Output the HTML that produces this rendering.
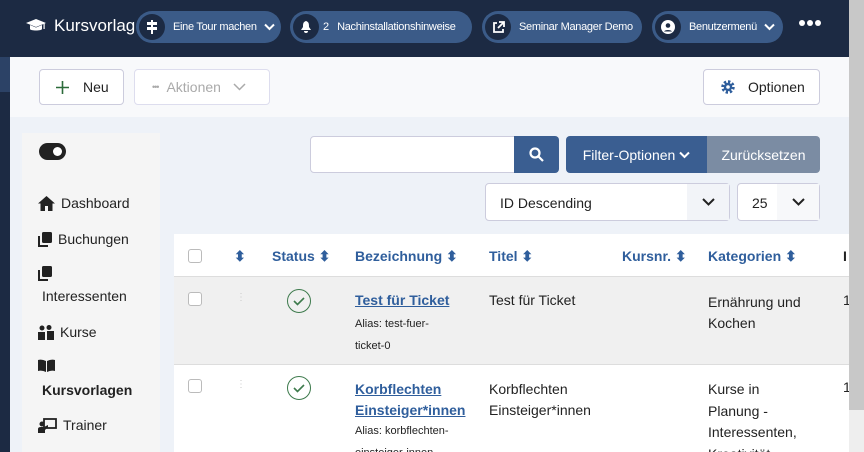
<!DOCTYPE html>
<html><head><meta charset="utf-8"><style>
*{box-sizing:border-box;margin:0;padding:0}
html,body{width:864px;height:452px;overflow:hidden}
body{font-family:"Liberation Sans",sans-serif;background:#eef2f8;position:relative;font-size:14px;color:#222}
.abs{position:absolute}
.hdr{left:0;top:0;width:864px;height:57px;background:#1c2a43}
.pill{position:absolute;top:11px;height:32px;border-radius:16px;background:#3b5b88;color:#fff;font-size:11px;letter-spacing:-0.3px;display:flex;align-items:center;padding-left:3px;white-space:nowrap;overflow:hidden}
.pill .ic{flex:none;width:26px;height:26px;border-radius:13px;background:#1c2a43;display:flex;align-items:center;justify-content:center;margin-right:8px}
.btn{position:absolute;background:#fff;border:1px solid #ccd;border-radius:4px;display:flex;align-items:center;font-size:14px;white-space:nowrap}
.th{position:absolute;top:248px;color:#2f5e9c;font-weight:bold;font-size:14px;white-space:nowrap}
.cb{position:absolute;width:14px;height:14px;border:1px solid #bbb;border-radius:3px;background:#fff}
.side{position:absolute;left:38px;font-size:14px;color:#222;display:flex;align-items:center;white-space:nowrap}
.side svg{margin-right:6px}
a{color:#2f5e9c;text-decoration:underline}
.check{position:absolute;width:24px;height:24px;border:1.5px solid #3d7a4c;border-radius:50%}
.t{white-space:nowrap}
</style></head><body>
<div class="abs hdr"></div>
<div class="abs" style="left:0;top:57px;width:10px;height:395px;background:#1c2a43"></div>
<div class="abs" style="left:0;top:57px;width:10px;height:35px;background:#2c4266"></div>
<div class="abs t" style="left:26px;top:16px;color:#fff;font-size:17px;display:flex;align-items:center"><svg width="20" height="16" viewBox="0 0 20 16" style="margin-right:8px"><path d="M10 1L0 5l10 4 10-4z" fill="#fff"/><path d="M4 7v4c0 2 12 2 12 0V7l-6 2.5z" fill="#fff"/><rect x="17.5" y="5" width="1.2" height="6" fill="#fff"/></svg>Kursvorlag</div>
<div class="pill" style="left:136px;width:145px"><span class="ic"><svg width="12" height="14" viewBox="0 0 12 14"><rect x="5" y="0" width="2" height="14" fill="#fff"/><rect x="1" y="2" width="10" height="3" fill="#fff"/><rect x="1" y="7" width="10" height="3" fill="#fff"/></svg></span>Eine Tour machen<svg style="margin-left:7px" width="11" height="8" viewBox="0 0 11 8" fill="none" stroke="#fff" stroke-width="2"><path d="M1 1.5l4.5 4.5 4.5-4.5"/></svg></div>
<div class="pill" style="left:290px;width:182px"><span class="ic" style="margin-right:4px"><svg width="12" height="13" viewBox="0 0 12 13"><path d="M6 0C3 1 3 3 3 6L1 9h10L9 6C9 3 9 1 6 0zM4 10a2 2 0 004 0z" fill="#fff"/></svg></span>2&nbsp;&nbsp;&nbsp;Nachinstallationshinweise</div>
<div class="pill" style="left:482px;width:160px"><span class="ic"><svg width="13" height="13" viewBox="0 0 13 13" fill="none" stroke="#fff" stroke-width="1.8"><path d="M5 2H2v9h9V8M7 1h5v5M12 1L6 7"/></svg></span>Seminar Manager Demo</div>
<div class="pill" style="left:652px;width:131px"><span class="ic"><svg width="14" height="14" viewBox="0 0 14 14"><circle cx="7" cy="7" r="7" fill="#fff"/><circle cx="7" cy="5.5" r="2.3" fill="#1c2a43"/><path d="M3 11.5c1-2 7-2 8 0" fill="#1c2a43"/></svg></span>Benutzermenü<svg style="margin-left:7px" width="11" height="8" viewBox="0 0 11 8" fill="none" stroke="#fff" stroke-width="2"><path d="M1 1.5l4.5 4.5 4.5-4.5"/></svg></div>
<div class="abs" style="left:799px;top:20px;display:flex;gap:2px"><i style="width:6px;height:6px;border-radius:3px;background:#fff"></i><i style="width:6px;height:6px;border-radius:3px;background:#fff"></i><i style="width:6px;height:6px;border-radius:3px;background:#fff"></i></div>
<div class="abs" style="left:10px;top:57px;width:839px;height:60px;background:#f8f9fb"></div>
<div class="btn" style="left:39px;top:69px;width:85px;height:36px;padding-left:16px"><svg width="13" height="13" viewBox="0 0 13 13" style="margin-right:14px" stroke="#2c6b3a" stroke-width="1.6"><path d="M6.5 0v13M0 6.5h13"/></svg>Neu</div>
<div class="btn" style="left:134px;top:69px;width:136px;height:36px;padding-left:17px;color:#aaa;border-color:#dde"><span style="margin-right:8px;font-size:9px;letter-spacing:-1px">•••</span>Aktionen<svg style="margin-left:12px" width="13" height="8" viewBox="0 0 13 8" fill="none" stroke="#aaa" stroke-width="1.5"><path d="M1 1l5.5 5.5L12 1"/></svg></div>
<div class="btn" style="left:703px;top:69px;width:117px;height:36px;padding-left:17px"><svg width="14" height="14" viewBox="0 0 14 14" style="margin-right:13px"><circle cx="7" cy="7" r="5" fill="none" stroke="#2f5e9c" stroke-width="3.5" stroke-dasharray="2.2 1.7"/><circle cx="7" cy="7" r="4.2" fill="#2f5e9c"/><circle cx="7" cy="7" r="1.8" fill="#fff"/></svg>Optionen</div>
<div class="abs" style="left:22px;top:133px;width:138px;height:319px;background:#f5f5f5"></div>
<div class="abs" style="left:39px;top:143px;width:27px;height:17px;border-radius:9px;background:#222"><div style="position:absolute;left:14px;top:4px;width:9px;height:9px;border-radius:50%;background:#fff"></div></div>
<div class="side" style="top:195px"><svg width="17" height="15" viewBox="0 0 17 15"><path d="M8.5 0L0 7.5h2.5V15h4.5v-5h3v5h4.5V7.5H17z" fill="#222"/></svg>Dashboard</div>
<div class="side" style="top:231px"><svg width="14" height="15" viewBox="0 0 14 15"><rect x="4" y="0" width="10" height="11" rx="1.5" fill="#222"/><path d="M1 4v10h9" fill="none" stroke="#222" stroke-width="2"/></svg>Buchungen</div>
<div class="side" style="top:266px"><svg width="14" height="15" viewBox="0 0 14 15"><rect x="4" y="0" width="10" height="11" rx="1.5" fill="#222"/><path d="M1 4v10h9" fill="none" stroke="#222" stroke-width="2"/></svg></div>
<div class="side" style="left:42px;top:288px">Interessenten</div>
<div class="side" style="top:324px"><svg width="16" height="15" viewBox="0 0 16 15"><circle cx="4" cy="3" r="2.5" fill="#222"/><circle cx="11" cy="2.5" r="2.5" fill="#222"/><path d="M0 7h7v8H0zM9 6h7v9H9z" fill="#222"/></svg>Kurse</div>
<div class="side" style="top:359px"><svg width="17" height="13" viewBox="0 0 17 13"><path d="M0 1q4-1 8 1v11q-4-2-8-1zM17 1q-4-1-8 1v11q4-2 8-1z" fill="#222"/></svg></div>
<div class="side" style="left:42px;top:382px;font-weight:bold">Kursvorlagen</div>
<div class="side" style="top:417px"><svg width="19" height="15" viewBox="0 0 19 15"><rect x="6" y="1" width="12" height="9" fill="none" stroke="#222" stroke-width="1.8"/><circle cx="4" cy="6" r="2.5" fill="#222"/><path d="M0 15v-4q0-2 3-2h3l4-2v2l-3 3v3z" fill="#222"/></svg>Trainer</div>
<div class="abs" style="left:310px;top:136px;width:205px;height:37px;background:#fff;border:1px solid #ccd;border-radius:4px 0 0 4px"></div>
<div class="abs" style="left:514px;top:136px;width:45px;height:37px;background:#3a5e91;border-radius:0 4px 4px 0;display:flex;align-items:center;justify-content:center"><svg width="15" height="15" viewBox="0 0 15 15" fill="none" stroke="#fff" stroke-width="2.2"><circle cx="6" cy="6" r="4.5"/><path d="M9.5 9.5L14 14"/></svg></div>
<div class="abs t" style="left:566px;top:136px;width:141px;height:37px;background:#3a5e91;border-radius:4px 0 0 4px;color:#fff;display:flex;align-items:center;justify-content:center;font-size:14px">Filter-Optionen<svg style="margin-left:4px" width="11" height="8" viewBox="0 0 11 8" fill="none" stroke="#fff" stroke-width="2"><path d="M1 1.5l4.5 4.5 4.5-4.5"/></svg></div>
<div class="abs t" style="left:707px;top:136px;width:113px;height:37px;background:#7b8ca3;border-radius:0 4px 4px 0;color:#fff;display:flex;align-items:center;justify-content:center;font-size:14px">Zurücksetzen</div>
<div class="abs" style="left:485px;top:183px;width:245px;height:38px;background:#fff;border:1px solid #ccd;border-radius:4px;padding:11px 0 0 14px">ID Descending<div style="position:absolute;right:0;top:0;width:42px;height:36px;background:#f2f4f8;display:flex;align-items:center;justify-content:center"><svg width="13" height="8" viewBox="0 0 13 8" fill="none" stroke="#222" stroke-width="2"><path d="M1 1l5.5 5.5L12 1"/></svg></div></div>
<div class="abs" style="left:737px;top:183px;width:83px;height:38px;background:#fff;border:1px solid #ccd;border-radius:4px;padding:11px 0 0 14px">25<div style="position:absolute;right:0;top:0;width:42px;height:36px;background:#f7f8fa;display:flex;align-items:center;justify-content:center"><svg width="13" height="8" viewBox="0 0 13 8" fill="none" stroke="#222" stroke-width="2"><path d="M1 1l5.5 5.5L12 1"/></svg></div></div>
<div class="abs" style="left:174px;top:234px;width:675px;height:43px;background:#fff;border-bottom:1px solid #ddd"></div>
<div class="abs" style="left:174px;top:277px;width:675px;height:88px;background:#f0f0f0;border-bottom:1px solid #ddd"></div>
<div class="abs" style="left:174px;top:365px;width:675px;height:87px;background:#fff"></div>
<div class="cb" style="left:188px;top:249px"></div>
<div class="th" style="left:234px">⬍</div>
<div class="th" style="left:272px">Status ⬍</div>
<div class="th" style="left:355px">Bezeichnung ⬍</div>
<div class="th" style="left:489px">Titel ⬍</div>
<div class="th" style="left:622px">Kursnr. ⬍</div>
<div class="th" style="left:708px">Kategorien ⬍</div>
<div class="th" style="left:843px;color:#222">I</div>
<div class="cb" style="left:188px;top:292px"></div>
<div class="abs" style="left:236px;top:292px;color:#ccc;font-size:10px">⋮</div>
<div class="check" style="left:287px;top:289px"><svg width="22" height="22" viewBox="0 0 22 22" fill="none" stroke="#3d7a4c" stroke-width="1.6"><path d="M6 11l3.5 3.5L16 8"/></svg></div>
<div class="abs t" style="left:355px;top:292px;font-weight:bold"><a>Test für Ticket</a></div>
<div class="abs t" style="left:355px;top:313px;font-size:11px;line-height:22px">Alias: test-fuer-<br>ticket-0</div>
<div class="abs t" style="left:489px;top:292px">Test für Ticket</div>
<div class="abs t" style="left:708px;top:292px;line-height:21px">Ernährung und<br>Kochen</div>
<div class="abs" style="left:843px;top:292px">1</div>
<div class="cb" style="left:188px;top:379px"></div>
<div class="abs" style="left:236px;top:379px;color:#ccc;font-size:10px">⋮</div>
<div class="check" style="left:287px;top:376px"><svg width="22" height="22" viewBox="0 0 22 22" fill="none" stroke="#3d7a4c" stroke-width="1.6"><path d="M6 11l3.5 3.5L16 8"/></svg></div>
<div class="abs t" style="left:355px;top:379px;font-weight:bold;line-height:21px"><a>Korbflechten</a><br><a>Einsteiger*innen</a></div>
<div class="abs t" style="left:355px;top:420px;font-size:11px;line-height:22px">Alias: korbflechten-<br>einsteiger-innen</div>
<div class="abs t" style="left:489px;top:379px;line-height:21px">Korbflechten<br>Einsteiger*innen</div>
<div class="abs t" style="left:708px;top:379px;line-height:21.5px">Kurse in<br>Planung -<br>Interessenten,<br>Kreativität -</div>
<div class="abs" style="left:843px;top:379px">1</div>
<div class="abs" style="left:849px;top:0;width:15px;height:452px;background:#eee"></div>
<div class="abs" style="left:849px;top:0;width:15px;height:410px;background:#c8c8c8"></div>
</body></html>
